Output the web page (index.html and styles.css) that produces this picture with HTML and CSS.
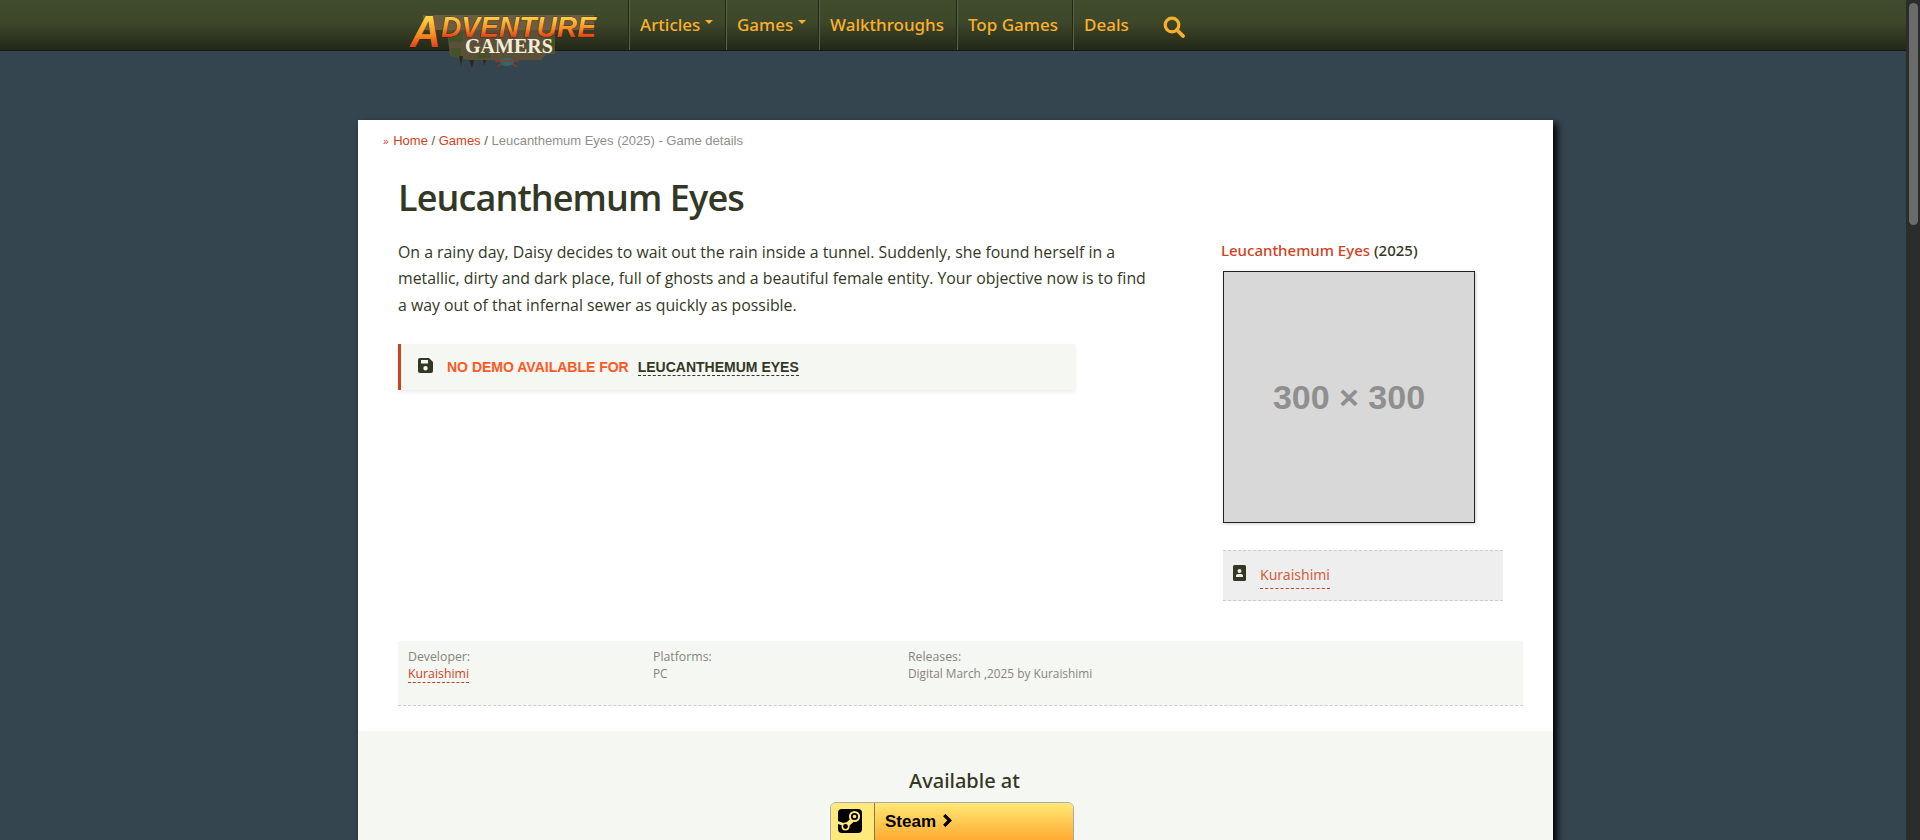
FILE: index.html
```html
<!DOCTYPE html>
<html lang="en">
<head>
  <meta charset="UTF-8">
  <meta name="viewport" content="width=device-width, initial-scale=1.0">
  <title>Leucanthemum Eyes (2025) - Game details</title>
  <link rel="stylesheet" href="styles.css">
</head>
<body>
  <div class="page">
    <header class="topbar">
      <a class="logo" href="#">
        <svg class="logo-art" width="192" height="60" viewBox="0 0 192 60">
          <defs>
            <linearGradient id="logoFill" gradientUnits="userSpaceOnUse" x1="0" y1="6" x2="0" y2="27">
              <stop offset="0" stop-color="#ffd84a"/>
              <stop offset="0.6" stop-color="#f98e22"/>
              <stop offset="1" stop-color="#e0401c"/>
            </linearGradient>
            <linearGradient id="logoCap" gradientUnits="userSpaceOnUse" x1="0" y1="6" x2="0" y2="37">
              <stop offset="0" stop-color="#ffd84a"/>
              <stop offset="0.6" stop-color="#f98e22"/>
              <stop offset="1" stop-color="#e0401c"/>
            </linearGradient>
          </defs>
          <rect x="16" y="5" width="171" height="15" fill="#6b5d43"/>
          <path d="M40 20H148V44H140L134 50H62L43 46Z" fill="#5a5038"/>
          <path d="M42 22H56V32H42ZM138 24H148V42H138ZM44 38H54V47H44ZM70 42H84V48H70Z" fill="#46512a"/>
          <path d="M52 46l2 10 2-10ZM62 50l3 8 2-8ZM76 50l1 6 2-6Z" fill="#2b2a1a"/>
          <g class="logo-spider">
            <ellipse cx="100" cy="52" rx="7" ry="4"/>
            <path d="M88 51h24M90 57l6-4M110 57l-6-4" stroke="#8a3a34" stroke-width="1.500" fill="none"/>
          </g>
          <text class="logo-main" x="3" y="27" fill="url(#logoFill)" textLength="186" lengthAdjust="spacingAndGlyphs"><tspan class="logo-cap" dy="10" fill="url(#logoCap)">A</tspan><tspan dy="-10">DVENTURE</tspan></text>
          <text class="logo-sub" x="58" y="43" textLength="88" lengthAdjust="spacingAndGlyphs">GAMERS</text>
        </svg>
      </a>
      <nav class="mainnav">
        <a class="navitem w-articles" href="#">Articles<i class="caret"></i></a>
        <a class="navitem w-games" href="#">Games<i class="caret"></i></a>
        <a class="navitem w-walk" href="#">Walkthroughs</a>
        <a class="navitem w-top" href="#">Top Games</a>
        <a class="navitem w-deals" href="#">Deals</a>
        <a class="navsearch" href="#">
          <svg width="22" height="22" viewBox="0 0 22 22" fill="none" stroke="#fbb02c">
            <circle cx="9" cy="9" r="6.800" stroke-width="3.200"/>
            <path d="M14 14l6 6" stroke-width="3.800" stroke-linecap="round"/>
          </svg>
        </a>
      </nav>
    </header>

    <main class="card">
      <div class="crumbs">
        <span class="crumbs-mark">»</span> <a href="#">Home</a> / <a href="#">Games</a> / <span class="crumbs-here">Leucanthemum Eyes (2025) - Game details</span>
      </div>

      <div class="content">
        <h1>Leucanthemum Eyes</h1>
        <div class="columns">
          <div class="col-main">
            <p class="summary">On a rainy day, Daisy decides to wait out the rain inside a tunnel. Suddenly, she found herself in a metallic, dirty and dark place, full of ghosts and a beautiful female entity. Your objective now is to find a way out of that infernal sewer as quickly as possible.</p>
            <div class="notice">
              <svg class="notice-icon" width="15" height="15" viewBox="0 0 15 15">
                <path fill="#333825" fill-rule="evenodd" d="M2 0H11L15 4V13a2 2 0 0 1-2 2H2a2 2 0 0 1-2-2V2a2 2 0 0 1 2-2ZM3 2V5.500H10V2ZM7.500 8a2.200 2.200 0 1 0 0 4.400 2.200 2.200 0 0 0 0-4.400Z"/>
              </svg>
              <span class="notice-text">No demo available for</span>
              <a class="notice-link" href="#">Leucanthemum Eyes</a>
            </div>
          </div>
          <aside class="col-side">
            <div class="side-title"><a href="#">Leucanthemum Eyes</a> (2025)</div>
            <div class="cover">300 × 300</div>
            <div class="side-dev">
              <svg width="13" height="16" viewBox="0 0 13 16">
                <path fill="#333825" fill-rule="evenodd" d="M1.500 0H11.500A1.500 1.500 0 0 1 13 1.500V14.500A1.500 1.500 0 0 1 11.500 16H1.500A1.500 1.500 0 0 1 0 14.500V1.500A1.500 1.500 0 0 1 1.500 0ZM6.500 4a2 2 0 1 0 0 4 2 2 0 0 0 0-4ZM3 12H10V10.800C10 9.800 9 9 8 9H5C4 9 3 9.800 3 10.800Z"/>
              </svg>
              <a class="dashed" href="#">Kuraishimi</a>
            </div>
          </aside>
        </div>

        <div class="meta">
          <div class="meta-dev">
            <div class="meta-label">Developer:</div>
            <a class="dashed" href="#">Kuraishimi</a>
          </div>
          <div class="meta-plat">
            <div class="meta-label">Platforms:</div>
            <div>PC</div>
          </div>
          <div>
            <div class="meta-label">Releases:</div>
            <div>Digital March ,2025 by Kuraishimi</div>
          </div>
        </div>
      </div>

      <section class="available">
        <h2>Available at</h2>
        <a class="buybtn" href="#">
          <span class="buybtn-icon">
            <svg width="24" height="24" viewBox="0 0 24 24">
              <rect width="24" height="24" rx="4" fill="#000"/>
              <path fill="#ffe97a" d="M0 12L7.500 14.800 6 17 0 15ZM12.500 10L15.500 13 10.500 17.500 7 14.500Z"/>
              <circle cx="16.500" cy="7.500" r="4.600" fill="#000" stroke="#ffe97a" stroke-width="2"/>
              <circle cx="16.500" cy="7.500" r="1.800" fill="#ffe97a"/>
              <circle cx="7.500" cy="17.500" r="3.200" fill="#000" stroke="#ffe97a" stroke-width="1.600"/>
            </svg>
          </span>
          <span class="buybtn-label">Steam
            <svg class="buybtn-arrow" width="11" height="13" viewBox="0 0 10 12" fill="none" stroke="#000" stroke-width="3">
              <path d="M2 1l5 5-5 5"/>
            </svg>
          </span>
        </a>
      </section>
    </main>
  </div>

  <div class="scrollbar"><div class="scrollbar-thumb"></div></div>
</body>
</html>
```

FILE: styles.css
```css
html, body {
  margin: 0;
  padding: 0;
  height: 840px;
  overflow: hidden;
}

body {
  display: flex;
  background-color: #34454f;
  font-family: "Open Sans", Arial, sans-serif;
  color: #333825;
}

a {
  text-decoration: none;
  color: #d0421b;
}

.page {
  flex: 1;
  min-width: 0;
}

/* top bar */
.topbar {
  height: 51px;
  box-sizing: border-box;
  padding-left: 407px;
  display: flex;
  background: linear-gradient(to bottom, #414c2d 0%, #3d472a 45%, #222818 100%);
  border-bottom: 1px solid #171a10;
}

.logo {
  width: 192px;
  height: 60px;
  margin-top: 10px;
  margin-right: 30px;
  flex: none;
}

.logo-art {
  overflow: visible;
}

.logo-main {
  font-family: "Liberation Sans", Arial, sans-serif;
  font-size: 29px;
  font-weight: bold;
  font-style: italic;
  stroke: #2a1405;
  stroke-width: 0.7px;
  paint-order: stroke;
}

.logo-cap {
  font-size: 44px;
}

.logo-sub {
  font-family: "Liberation Serif", serif;
  font-size: 20px;
  font-weight: bold;
  fill: #f3ecd6;
}

.logo-spider {
  fill: #2b6a68;
}

.mainnav {
  display: flex;
  font-family: "Noto Sans", Arial, sans-serif;
}

.navitem {
  display: flex;
  align-items: center;
  height: 50px;
  box-sizing: border-box;
  padding: 0 0 2px 10px;
  border-left: 1px solid #5a6344;
  box-shadow: -1px 0 0 #20251a;
  color: #fbb02c;
  font-size: 17px;
  font-weight: 500;
}

.w-articles { width: 97px; }
.w-games { width: 93px; }
.w-walk { width: 138px; }
.w-top { width: 116px; }
.w-deals { width: 90px; }

.caret {
  width: 0;
  height: 0;
  margin: -5px 0 0 5px;
  border-left: 4px solid transparent;
  border-right: 4px solid transparent;
  border-top: 4px solid #fbb02c;
}

.navsearch {
  margin-top: 16px;
}

/* card */
.card {
  width: 1195px;
  margin: 69px 0 0 358px;
  background-color: #fff;
  box-shadow: 4px 4px 7px #000;
}

.crumbs {
  padding: 13px 0 0 25px;
  height: 24px;
  font-family: "Liberation Sans", Arial, sans-serif;
  font-size: 13px;
  line-height: 15px;
  color: #555;
}

.crumbs-mark {
  margin-right: 1px;
  color: #d0421b;
  font-size: 10px;
}

.crumbs-here {
  color: #8f8f88;
}

.content {
  padding: 0 30px 0 40px;
}

h1 {
  margin: 16px 0 0;
  font-size: 36px;
  line-height: 50px;
  font-weight: 600;
  letter-spacing: -0.9px;
  color: #333825;
}

.columns {
  display: flex;
  justify-content: space-between;
  height: 418px;
}

.col-main {
  width: 755px;
}

.summary {
  margin: 16px 0 0;
  font-size: 15.85px;
  line-height: 26.4px;
}

.notice {
  display: flex;
  align-items: center;
  width: 677px;
  height: 46px;
  box-sizing: border-box;
  margin-top: 26px;
  padding-left: 17px;
  border-left: 3px solid #d0421b;
  background-color: #f5f7f3;
  box-shadow: 0 2px 4px rgba(0, 0, 0, 0.08);
  font-family: "Liberation Sans", Arial, sans-serif;
  font-size: 14px;
  font-weight: bold;
  text-transform: uppercase;
}

.notice-icon {
  margin-top: -3px;
}

.notice-text {
  margin-left: 14px;
  color: #ff5722;
}

.notice-link {
  margin-left: 9px;
  color: #333825;
  border-bottom: 1px dashed #333825;
}

.col-side {
  width: 302px;
  padding-top: 17px;
}

.side-title {
  font-family: "Noto Sans", Arial, sans-serif;
  font-size: 15px;
  line-height: 20px;
  font-weight: 500;
}

.cover {
  display: flex;
  align-items: center;
  justify-content: center;
  width: 252px;
  height: 252px;
  box-sizing: border-box;
  margin: 11px 0 0 2px;
  border: 1px solid #222;
  background-color: #d8d8d8;
  box-shadow: 1px 1px 3px rgba(0, 0, 0, 0.2);
  font-family: "Liberation Sans", Arial, sans-serif;
  font-size: 34px;
  font-weight: bold;
  color: #8f8f8f;
}

.side-dev {
  display: flex;
  align-items: flex-start;
  gap: 14px;
  width: 280px;
  height: 51px;
  box-sizing: border-box;
  margin: 27px 0 0 2px;
  padding: 14px 0 0 10px;
  border-top: 1px dashed #ccc;
  border-bottom: 1px dashed #ccc;
  background-color: #eee;
  font-family: "Noto Sans", Arial, sans-serif;
  font-size: 14px;
  line-height: 20px;
}

.side-dev .dashed {
  color: #d0613f;
  padding-bottom: 3px;
}

.dashed {
  border-bottom: 1px dashed #d0421b;
}

.meta {
  display: flex;
  height: 65px;
  box-sizing: border-box;
  padding: 7px 0 0 10px;
  border-bottom: 1px dashed #ccc;
  background-color: #f5f7f3;
  font-size: 11.85px;
  line-height: 17px;
  color: #85857d;
}

.meta-dev { width: 245px; }
.meta-plat { width: 255px; }

.meta-label {
  font-size: 12.3px;
  font-weight: 500;
}

.meta .dashed {
  display: inline-block;
  font-size: 12.3px;
  line-height: 16px;
  font-weight: 500;
}

/* where to buy */
.available {
  margin-top: 25px;
  padding-top: 37px;
  height: 200px;
  background-color: #f5f7f3;
  text-align: center;
}

h2 {
  margin: 0 0 8px;
  padding-left: 18px;
  font-family: "Noto Sans", Arial, sans-serif;
  font-size: 20px;
  line-height: 26px;
  font-weight: 500;
  color: #333825;
}

.buybtn {
  display: inline-flex;
  width: 244px;
  height: 46px;
  box-sizing: border-box;
  margin-left: -7px;
  border: 1px solid #aaa;
  border-radius: 6px;
  overflow: hidden;
  color: #000;
  text-align: left;
}

.buybtn-icon {
  width: 44px;
  box-sizing: border-box;
  padding: 6px 0 0 7px;
  border-right: 1px solid #8a7a40;
  background-color: #ffe97a;
}

.buybtn-label {
  flex: 1;
  padding: 9px 0 0 10px;
  background: linear-gradient(to bottom, #ffe974, #ff9f25);
  font-family: "Liberation Sans", Arial, sans-serif;
  font-size: 17px;
  line-height: 20px;
  font-weight: bold;
}

.buybtn-arrow {
  margin-left: 1px;
}

/* fake page scrollbar */
.scrollbar {
  flex: none;
  width: 14px;
  box-sizing: border-box;
  padding: 3px 2px 0 3px;
  background-color: #2c2c2c;
}

.scrollbar-thumb {
  height: 222px;
  border-radius: 5px;
  background-color: #6b6b6b;
}
```
